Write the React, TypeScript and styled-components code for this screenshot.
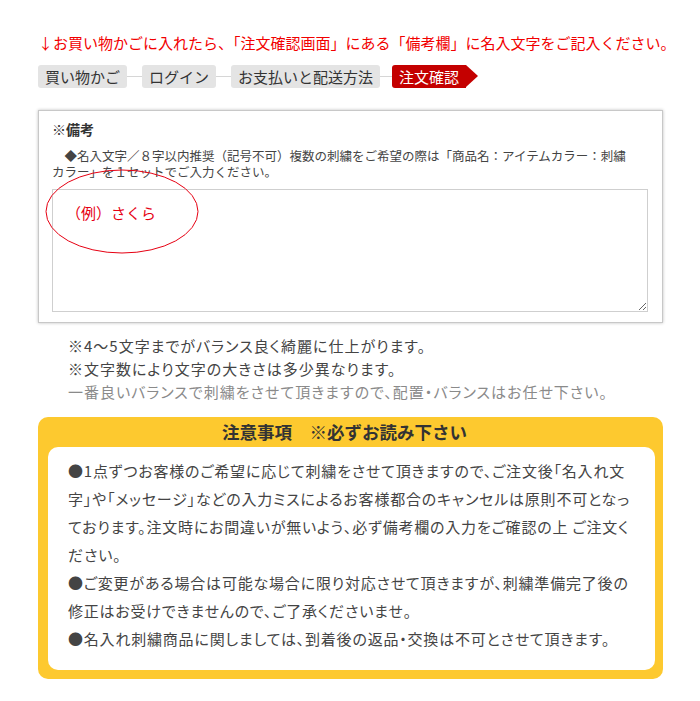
import React from 'react'
import styled, { createGlobalStyle } from 'styled-components'

const GlobalStyle = createGlobalStyle`
  html, body {
    margin: 0;
    padding: 0;
    background: #fff;
  }
  body {
    font-family: "Noto Sans CJK JP", "Noto Sans", sans-serif;
    color: #333;
  }
`

const Page = styled.div`
  width: 625px;
  padding: 31px 0 20px 38px;
`

const Headline = styled.p`
  margin: 0;
  color: #f20000;
  font-size: 15px;
  line-height: 24px;
  white-space: nowrap;
`

const Steps = styled.div`
  display: flex;
  align-items: center;
  margin-top: 10px;
`

const Step = styled.span<{ $active?: boolean }>`
  position: relative;
  height: 23px;
  line-height: 23px;
  padding: 0 7px;
  font-size: 15px;
  border-radius: 3px;
  background: ${p => (p.$active ? '#c40000' : '#e4e4e4')};
  color: ${p => (p.$active ? '#fff' : '#333')};
  ${p => p.$active && `
    border-radius: 3px 0 0 3px;
    margin-right: 12px;
    &::after {
      content: '';
      position: absolute;
      right: -12px;
      top: 0;
      border-top: 11.5px solid transparent;
      border-bottom: 11.5px solid transparent;
      border-left: 12px solid #c40000;
    }
  `}
`

const Link = styled.span<{ $w?: number }>`
  width: ${p => p.$w ?? 15}px;
  height: 1px;
  background: #d6d6d6;
`

const Card = styled.div`
  margin-top: 22px;
  border: 1px solid #c8c8c8;
  box-shadow: 0 0 3px rgba(0, 0, 0, 0.25);
  background: #fff;
  padding: 8px 14px 10px 13px;
`

const CardTitle = styled.div`
  font-size: 14px;
  font-weight: 700;
  line-height: 20px;
  color: #333;
`

const Desc = styled.p`
  margin: 9px 0 0;
  font-size: 12.5px;
  line-height: 16px;
  color: #444;
  text-indent: 1em;
  white-space: nowrap;
`

const AreaWrap = styled.div`
  position: relative;
  margin-top: 9px;
`

const Area = styled.textarea`
  display: block;
  box-sizing: border-box;
  width: 596px;
  height: 123px;
  border: 1px solid #cfcfcf;
  resize: both;
  font-family: inherit;
  font-size: 14px;
  margin: 0;
`

const Example = styled.span`
  position: absolute;
  left: 14px;
  top: 15px;
  color: #e60012;
  font-size: 15px;
  line-height: 18px;
  pointer-events: none;
`

const Ring = styled.svg`
  position: absolute;
  left: -7px;
  top: -20px;
  pointer-events: none;
`

const Notes = styled.div`
  margin-top: 11px;
  padding-left: 30px;
`

const Note = styled.p<{ $light?: boolean }>`
  margin: 0;
  font-size: 15px;
  line-height: 23px;
  letter-spacing: 1px;
  font-feature-settings: "palt";
  color: ${p => (p.$light ? '#8a8a8a' : '#444')};
  white-space: nowrap;
`

const Caution = styled.div`
  margin-top: 14px;
  background: #fdc92f;
  border-radius: 10px;
  padding: 0 8px 9px 10px;
`

const CautionTitle = styled.div`
  text-align: center;
  font-size: 17.5px;
  font-weight: 700;
  line-height: 30px;
  color: #333;
  padding-right: 14px;
  white-space: pre;
`

const CautionBody = styled.div`
  background: #fff;
  border-radius: 10px;
  padding: 10px 20px 17px 20px;
`

const CautionLine = styled.p`
  margin: 0;
  font-size: 15px;
  line-height: 28px;
  letter-spacing: 0.8px;
  font-feature-settings: "palt";
  color: #444;
  white-space: nowrap;
`

const cautionLines = [
  '●1点ずつお客様のご希望に応じて刺繍をさせて頂きますので、ご注文後「名入れ文',
  '字」や「メッセージ」などの入力ミスによるお客様都合のキャンセルは原則不可となっ',
  'ております。注文時にお間違いが無いよう、必ず備考欄の入力をご確認の上 ご注文く',
  'ださい。',
  '●ご変更がある場合は可能な場合に限り対応させて頂きますが、刺繍準備完了後の',
  '修正はお受けできませんので、ご了承くださいませ。',
  '●名入れ刺繍商品に関しましては、到着後の返品・交換は不可とさせて頂きます。',
]

export default function App() {
  return (
    <>
      <GlobalStyle />
      <Page>
        <Headline>↓お買い物かごに入れたら、「注文確認画面」にある「備考欄」に名入文字をご記入ください。</Headline>

        <Steps>
          <Step>買い物かご</Step>
          <Link />
          <Step>ログイン</Step>
          <Link />
          <Step>お支払いと配送方法</Step>
          <Link $w={12} />
          <Step $active>注文確認</Step>
        </Steps>

        <Card>
          <CardTitle>※備考</CardTitle>
          <Desc>
            ◆名入文字／８字以内推奨（記号不可）複数の刺繍をご希望の際は「商品名：アイテムカラー：刺繍
            <br />
            カラー」を１セットでご入力ください。
          </Desc>
          <AreaWrap>
            <Area />
            <Example>（例）さくら</Example>
            <Ring width="154" height="85" viewBox="0 0 154 85">
              <ellipse cx="77" cy="42.5" rx="76" ry="41.5" fill="none" stroke="#e60012" strokeWidth="1" />
            </Ring>
          </AreaWrap>
        </Card>

        <Notes>
          <Note>※4〜5文字までがバランス良く綺麗に仕上がります。</Note>
          <Note>※文字数により文字の大きさは多少異なります。</Note>
          <Note $light>一番良いバランスで刺繍をさせて頂きますので、配置・バランスはお任せ下さい。</Note>
        </Notes>

        <Caution>
          <CautionTitle>注意事項　※必ずお読み下さい</CautionTitle>
          <CautionBody>
            {cautionLines.map((line, i) => (
              <CautionLine key={i}>{line}</CautionLine>
            ))}
          </CautionBody>
        </Caution>
      </Page>
    </>
  )
}
